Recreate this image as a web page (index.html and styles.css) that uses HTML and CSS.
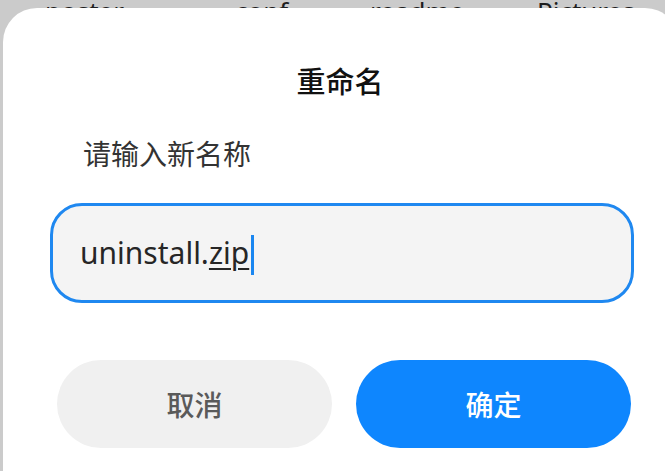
FILE: index.html
```html
<!DOCTYPE html>
<html lang="zh-CN">
<head>
<meta charset="utf-8">
<title>重命名</title>
<link rel="stylesheet" href="styles.css">
</head>
<body>
<div class="files">
  <span class="file f1">poster</span>
  <span class="file f2">conf</span>
  <span class="file f3">readme</span>
  <span class="file f4">Pictures</span>
</div>
<div class="dialog">
  <div class="title">重命名</div>
  <div class="label">请输入新名称</div>
  <div class="input"><span class="value">uninstall.<span class="ext">zip</span></span><span class="caret"></span></div>
  <div class="actions">
    <button class="btn cancel">取消</button>
    <button class="btn ok">确定</button>
  </div>
</div>
</body>
</html>
```
FILE: styles.css
```css
* { box-sizing: border-box; }
html, body {
  margin: 0;
  padding: 0;
  height: 100%;
  overflow: hidden;
}
body {
  background: #cbcbcb;
  font-family: "Noto Sans", "Noto Sans CJK SC", sans-serif;
  width: 665px;
  height: 471px;
}
.files {
  height: 8px;
  display: flex;
  padding-left: 45px;
  font-size: 26px;
  line-height: 26px;
  color: #1e1e1e;
  white-space: nowrap;
}
.file { display: block; flex: none; margin-top: -2px; }
.f1 { width: 190px; }
.f2 { width: 135px; }
.f3 { width: 167px; }
.f4 { width: 128px; }
.dialog {
  position: relative;
  z-index: 1;
  margin-left: 3px;
  width: 676px;
  height: 470px;
  background: #fff;
  border-radius: 34px 34px 0 0;
  padding: 54px 45px 0 47px;
}
.title {
  text-align: center;
  font-family: "Noto Sans CJK SC", sans-serif;
  font-size: 29px;
  line-height: 36px;
  font-weight: 500;
  color: #111;
  padding-right: 4px;
}
.label {
  margin-top: 38px;
  padding-left: 33px;
  font-family: "Noto Sans CJK SC", sans-serif;
  font-size: 28px;
  line-height: 34px;
  color: #333;
}
.input {
  margin-top: 33px;
  height: 100px;
  border: 3px solid #1f88f0;
  border-radius: 32px;
  background: #f4f4f4;
  display: flex;
  align-items: center;
  padding-left: 27px;
}
.value {
  font-family: "Noto Sans", sans-serif;
  font-size: 30px;
  color: #262626;
  line-height: 40px;
}
.ext {
  text-decoration: underline;
  text-decoration-thickness: 1.5px;
  text-underline-offset: 4px;
}
.caret {
  width: 3px;
  height: 40px;
  background: #1a86f0;
  margin-left: 2px;
  margin-top: 3px;
}
.actions {
  margin-top: 57px;
  display: flex;
  gap: 24px;
  padding: 0 3px 0 7px;
}
.btn {
  flex: 1;
  height: 88px;
  border: none;
  border-radius: 44px;
  font-family: "Noto Sans CJK SC", sans-serif;
  font-size: 28px;
  font-weight: 500;
  padding: 0;
}
.cancel {
  background: #f0f0f0;
  color: #5a5a5a;
}
.ok {
  background: #0e86fe;
  color: #fff;
}
```
